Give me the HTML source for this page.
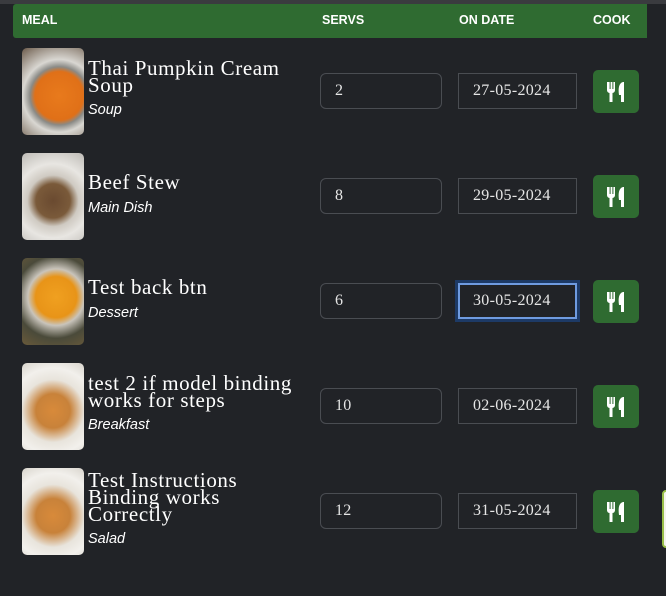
<!DOCTYPE html>
<html><head><style>
body{margin:0;width:666px;height:596px;background:#212327;position:relative;overflow:hidden;font-family:"Liberation Sans",sans-serif}
.top{position:absolute;left:0;top:0;width:666px;height:4px;background:#3a3b3f}
.hdr{position:absolute;left:13px;top:4px;width:634px;height:34px;background:#2f6b31;border-radius:3px 0 0 3px}
.hdr span{position:absolute;top:9px;color:#fff;font-weight:bold;font-size:12.5px}
.row{position:absolute;left:0;width:666px;height:105px}
.img{position:absolute;left:22px;width:62px;height:87px;border-radius:5px;overflow:hidden}
.title{position:absolute;left:88px;color:#fff;font-family:"Liberation Serif",serif;font-size:21px;letter-spacing:.6px;line-height:17px;width:212px}
.cat{position:absolute;left:88px;color:#fff;font-style:italic;font-size:14.5px}
.in{position:absolute;box-sizing:border-box;border:1px solid #4a4d52;color:#e6e6e6;font-family:"Liberation Serif",serif;font-size:16px;letter-spacing:.3px;padding-left:14px;line-height:34px;height:36px}
.srv{left:320px;width:122px;border-radius:6px}
.dt{left:458px;width:119px}
.btn{position:absolute;left:593px;width:46px;height:43px;background:#2f6b31;border-radius:5px}
</style></head><body>
<div class="top"></div>
<div class="hdr"><span style="left:9px">MEAL</span><span style="left:309px">SERVS</span><span style="left:446px">ON DATE</span><span style="left:580px">COOK</span></div>

<div class="row" style="top:38px">
<div class="img" style="top:10px;background:radial-gradient(circle at 60% 55%,#e87a1c 0,#e07018 40%,#8a8a86 48%,#d9d7d2 60%,#6b5a4a 100%)"></div>
<div class="title" style="top:22px">Thai Pumpkin Cream Soup</div>
<div class="cat" style="top:64px">Soup</div>
<div class="in srv" style="top:35px">2</div>
<div class="in dt" style="top:35px">27-05-2024</div>
<div class="btn" style="top:32px"><svg width="46" height="43"><path d="M14 12v8a3 3 0 0 0 2.5 3v9h3v-9a3 3 0 0 0 2.5-3v-8h-1.6v7h-1v-7h-1.8v7h-1v-7z" fill="#fff"/><path d="M30 12c-4 1-5 6-4 13h2v7h3v-20z" fill="#fff"/></svg></div>
</div>

<div class="row" style="top:143px">
<div class="img" style="top:10px;background:radial-gradient(circle at 50% 55%,#6a4a30 0,#7a5a3a 30%,#cfcac2 45%,#e8e6e2 65%,#bdbab5 100%)"></div>
<div class="title" style="top:31px">Beef Stew</div>
<div class="cat" style="top:57px">Main Dish</div>
<div class="in srv" style="top:35px">8</div>
<div class="in dt" style="top:35px">29-05-2024</div>
<div class="btn" style="top:32px"><svg width="46" height="43"><path d="M14 12v8a3 3 0 0 0 2.5 3v9h3v-9a3 3 0 0 0 2.5-3v-8h-1.6v7h-1v-7h-1.8v7h-1v-7z" fill="#fff"/><path d="M30 12c-4 1-5 6-4 13h2v7h3v-20z" fill="#fff"/></svg></div>
</div>

<div class="row" style="top:248px">
<div class="img" style="top:10px;background:radial-gradient(circle at 55% 45%,#f0a020 0,#e89418 35%,#c9c4bb 48%,#4a4a3a 70%,#6a5a3a 100%)"></div>
<div class="title" style="top:31px">Test back btn</div>
<div class="cat" style="top:57px">Dessert</div>
<div class="in srv" style="top:35px">6</div>
<div class="in dt" style="top:35px;border:2px solid #6f9be0;box-shadow:0 0 0 3px #1d3a66;line-height:32px;padding-left:13px">30-05-2024</div>
<div class="btn" style="top:32px"><svg width="46" height="43"><path d="M14 12v8a3 3 0 0 0 2.5 3v9h3v-9a3 3 0 0 0 2.5-3v-8h-1.6v7h-1v-7h-1.8v7h-1v-7z" fill="#fff"/><path d="M30 12c-4 1-5 6-4 13h2v7h3v-20z" fill="#fff"/></svg></div>
</div>

<div class="row" style="top:353px">
<div class="img" style="top:10px;background:radial-gradient(circle at 50% 55%,#d88a3a 0,#c8823a 30%,#e8e4dc 55%,#f2f0ec 75%,#d8d4cc 100%)"></div>
<div class="title" style="top:22px">test 2 if model binding works for steps</div>
<div class="cat" style="top:64px">Breakfast</div>
<div class="in srv" style="top:35px">10</div>
<div class="in dt" style="top:35px">02-06-2024</div>
<div class="btn" style="top:32px"><svg width="46" height="43"><path d="M14 12v8a3 3 0 0 0 2.5 3v9h3v-9a3 3 0 0 0 2.5-3v-8h-1.6v7h-1v-7h-1.8v7h-1v-7z" fill="#fff"/><path d="M30 12c-4 1-5 6-4 13h2v7h3v-20z" fill="#fff"/></svg></div>
</div>

<div class="row" style="top:458px">
<div class="img" style="top:10px;background:radial-gradient(circle at 50% 55%,#d88a3a 0,#c8823a 30%,#e8e4dc 55%,#f2f0ec 75%,#d8d4cc 100%)"></div>
<div class="title" style="top:14px;width:180px">Test Instructions Binding works Correctly</div>
<div class="cat" style="top:73px">Salad</div>
<div class="in srv" style="top:35px">12</div>
<div class="in dt" style="top:35px">31-05-2024</div>
<div class="btn" style="top:32px"><svg width="46" height="43"><path d="M14 12v8a3 3 0 0 0 2.5 3v9h3v-9a3 3 0 0 0 2.5-3v-8h-1.6v7h-1v-7h-1.8v7h-1v-7z" fill="#fff"/><path d="M30 12c-4 1-5 6-4 13h2v7h3v-20z" fill="#fff"/></svg></div>
</div>
<div style="position:absolute;left:662px;top:490px;width:8px;height:54px;border:2px solid #9bc04a;border-radius:4px;background:#f4f4ec"></div>
</body></html>
